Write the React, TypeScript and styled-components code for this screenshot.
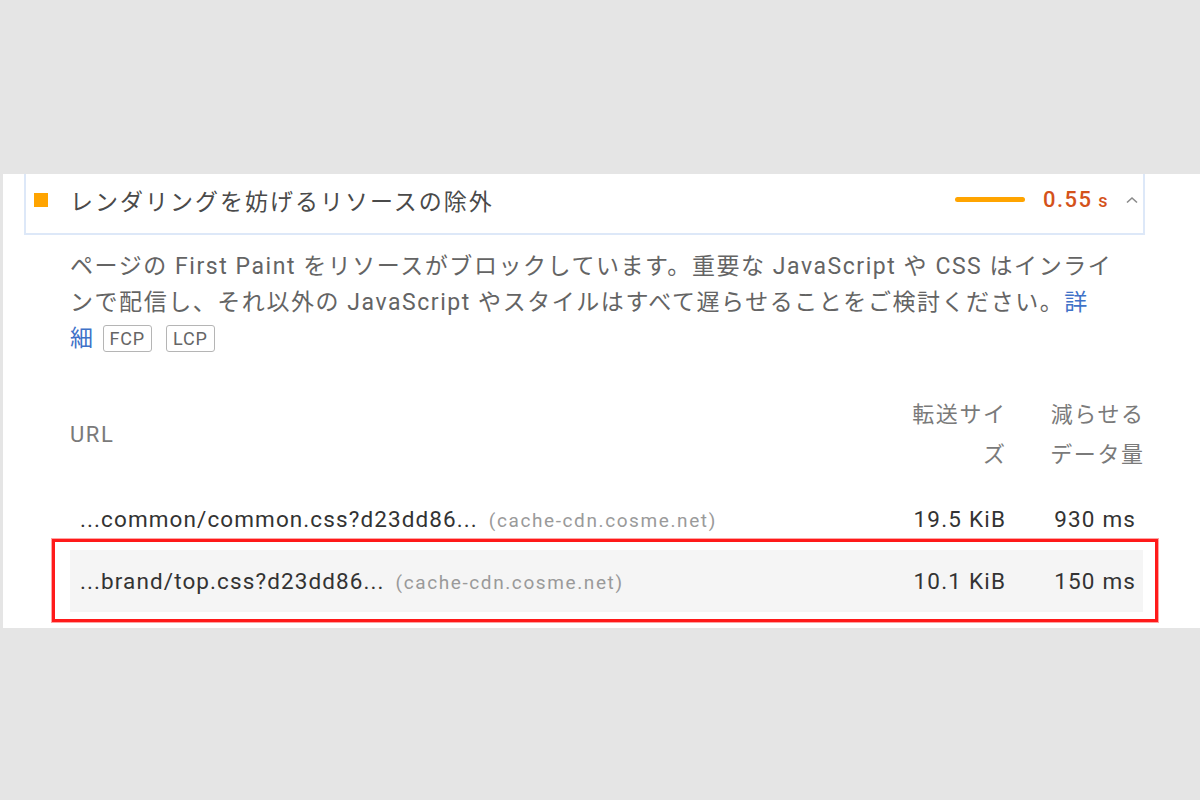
import React from "react";
import styled, { createGlobalStyle } from "styled-components";

const GlobalStyle = createGlobalStyle`
  html, body {
    margin: 0;
    padding: 0;
    background: #e5e5e5;
  }
  body {
    font-family: Roboto, "Noto Sans CJK JP", "Noto Sans", sans-serif;
  }
`;

const Page = styled.div`
  width: 1200px;
  height: 800px;
  padding-top: 174px;
  box-sizing: border-box;
`;

const Panel = styled.section`
  margin-left: 3px;
  width: 1197px;
  height: 454px;
  background: #ffffff;
  box-sizing: border-box;
  padding-left: 21px;
  padding-right: 55px;
`;

const AuditHeader = styled.div`
  display: flex;
  align-items: center;
  height: 61px;
  box-sizing: border-box;
  border: 2px solid #dde8f8;
  border-top: none;
  padding: 0 4px 8px 8px;
`;

const ScoreSquare = styled.span`
  width: 14px;
  height: 14px;
  background: #ffa400;
  flex: none;
`;

const Title = styled.h2`
  margin: 0 0 0 22px;
  flex: 1;
  font-size: 23px;
  font-weight: 400;
  letter-spacing: 2px;
  color: #4a4a4a;
  white-space: nowrap;
`;

const Bar = styled.span`
  width: 70px;
  height: 5px;
  border-radius: 3px;
  background: #ffa400;
  flex: none;
`;

const Value = styled.span`
  margin-left: 18px;
  font-size: 22px;
  font-weight: 500;
  color: #d4521a;
  letter-spacing: 1.4px;
  white-space: nowrap;
`;

const Unit = styled.span`
  font-size: 18px;
  margin-left: 6px;
`;

const Chevron = styled.svg`
  margin-left: 16px;
  width: 14px;
  height: 10px;
  flex: none;
`;

const Body = styled.div`
  padding-left: 46px;
`;

const Description = styled.p`
  margin: 14px 0 0 0;
  font-size: 23px;
  line-height: 36px;
  letter-spacing: 1.55px;
  color: #646464;
  white-space: nowrap;
`;

const Link = styled.a`
  color: #3f72c8;
  text-decoration: none;
`;

const Chip = styled.span<{ $gap: number }>`
  display: inline-block;
  margin-left: ${(p) => p.$gap}px;
  height: 25px;
  line-height: 25px;
  padding: 0 6px;
  border: 1px solid #b5b5b5;
  border-radius: 3px;
  font-size: 18px;
  letter-spacing: 0.8px;
  color: #666;
  vertical-align: 1px;
`;

const Table = styled.div`
  margin-top: 38px;
  width: 1073px;
`;

const HeadRow = styled.div`
  display: grid;
  grid-template-columns: 1fr 120px 138px;
  align-items: center;
  margin-bottom: 13px;
`;

const HeadCell = styled.div<{ $align?: string }>`
  text-align: ${(p) => p.$align || "left"};
  font-size: 22px;
  line-height: 40px;
  letter-spacing: 1.6px;
  margin-right: ${(p) => (p.$align === "right" ? "-1.6px" : "0")};
  color: #7a7a7a;
`;

const Row = styled.div<{ $shaded?: boolean }>`
  position: relative;
  display: grid;
  grid-template-columns: 1fr 120px 130px;
  align-items: center;
  height: 62px;
  padding: 0 8px 0 10px;
  background: ${(p) => (p.$shaded ? "#f5f5f5" : "transparent")};
`;

const UrlCell = styled.div`
  display: flex;
  align-items: baseline;
  white-space: nowrap;
`;

const UrlText = styled.span`
  font-size: 22.5px;
  letter-spacing: 1.1px;
  color: #333;
`;

const Origin = styled.span`
  margin-left: 11px;
  font-size: 19px;
  letter-spacing: 1.6px;
  color: #9a9a9a;
`;

const NumCell = styled.div`
  text-align: right;
  font-size: 22.5px;
  letter-spacing: 1.2px;
  margin-right: -1.2px;
  color: #333;
  white-space: nowrap;
`;

const Annotation = styled.div`
  position: absolute;
  top: -11px;
  bottom: -10px;
  left: -18px;
  right: -15px;
  border: 3px solid #ff1a1a;
  box-shadow: 0 0 0 1px rgba(255, 90, 90, 0.55);
  pointer-events: none;
`;

const rows = [
  { url: "...common/common.css?d23dd86...", size: "19.5 KiB", ms: "930 ms" },
  { url: "...brand/top.css?d23dd86...", size: "10.1 KiB", ms: "150 ms" },
];

export default function App() {
  return (
    <>
      <GlobalStyle />
      <Page>
        <Panel>
          <AuditHeader>
            <ScoreSquare />
            <Title>レンダリングを妨げるリソースの除外</Title>
            <Bar />
            <Value>
              0.55<Unit>s</Unit>
            </Value>
            <Chevron viewBox="0 0 14 10">
              <path d="M2 7.5 L7 3 L12 7.5" fill="none" stroke="#8a8a8a" strokeWidth="1.6" />
            </Chevron>
          </AuditHeader>
          <Body>
            <Description>
              {"ページの First Paint をリソースがブロックしています。重要な JavaScript や CSS はインライ"}
              <br />
              {"ンで配信し、それ以外の JavaScript やスタイルはすべて遅らせることをご検討ください。"}
              <Link href="#">
                詳<br />細
              </Link>
              <Chip $gap={8}>FCP</Chip>
              <Chip $gap={14}>LCP</Chip>
            </Description>
            <Table>
              <HeadRow>
                <HeadCell>URL</HeadCell>
                <HeadCell $align="right">
                  転送サイ
                  <br />ズ
                </HeadCell>
                <HeadCell $align="right">
                  減らせる
                  <br />
                  データ量
                </HeadCell>
              </HeadRow>
              {rows.map((r, i) => (
                <Row key={r.url} $shaded={i === 1}>
                  <UrlCell>
                    <UrlText>{r.url}</UrlText>
                    <Origin>(cache-cdn.cosme.net)</Origin>
                  </UrlCell>
                  <NumCell>{r.size}</NumCell>
                  <NumCell>{r.ms}</NumCell>
                  {i === 1 && <Annotation />}
                </Row>
              ))}
            </Table>
          </Body>
        </Panel>
      </Page>
    </>
  );
}
